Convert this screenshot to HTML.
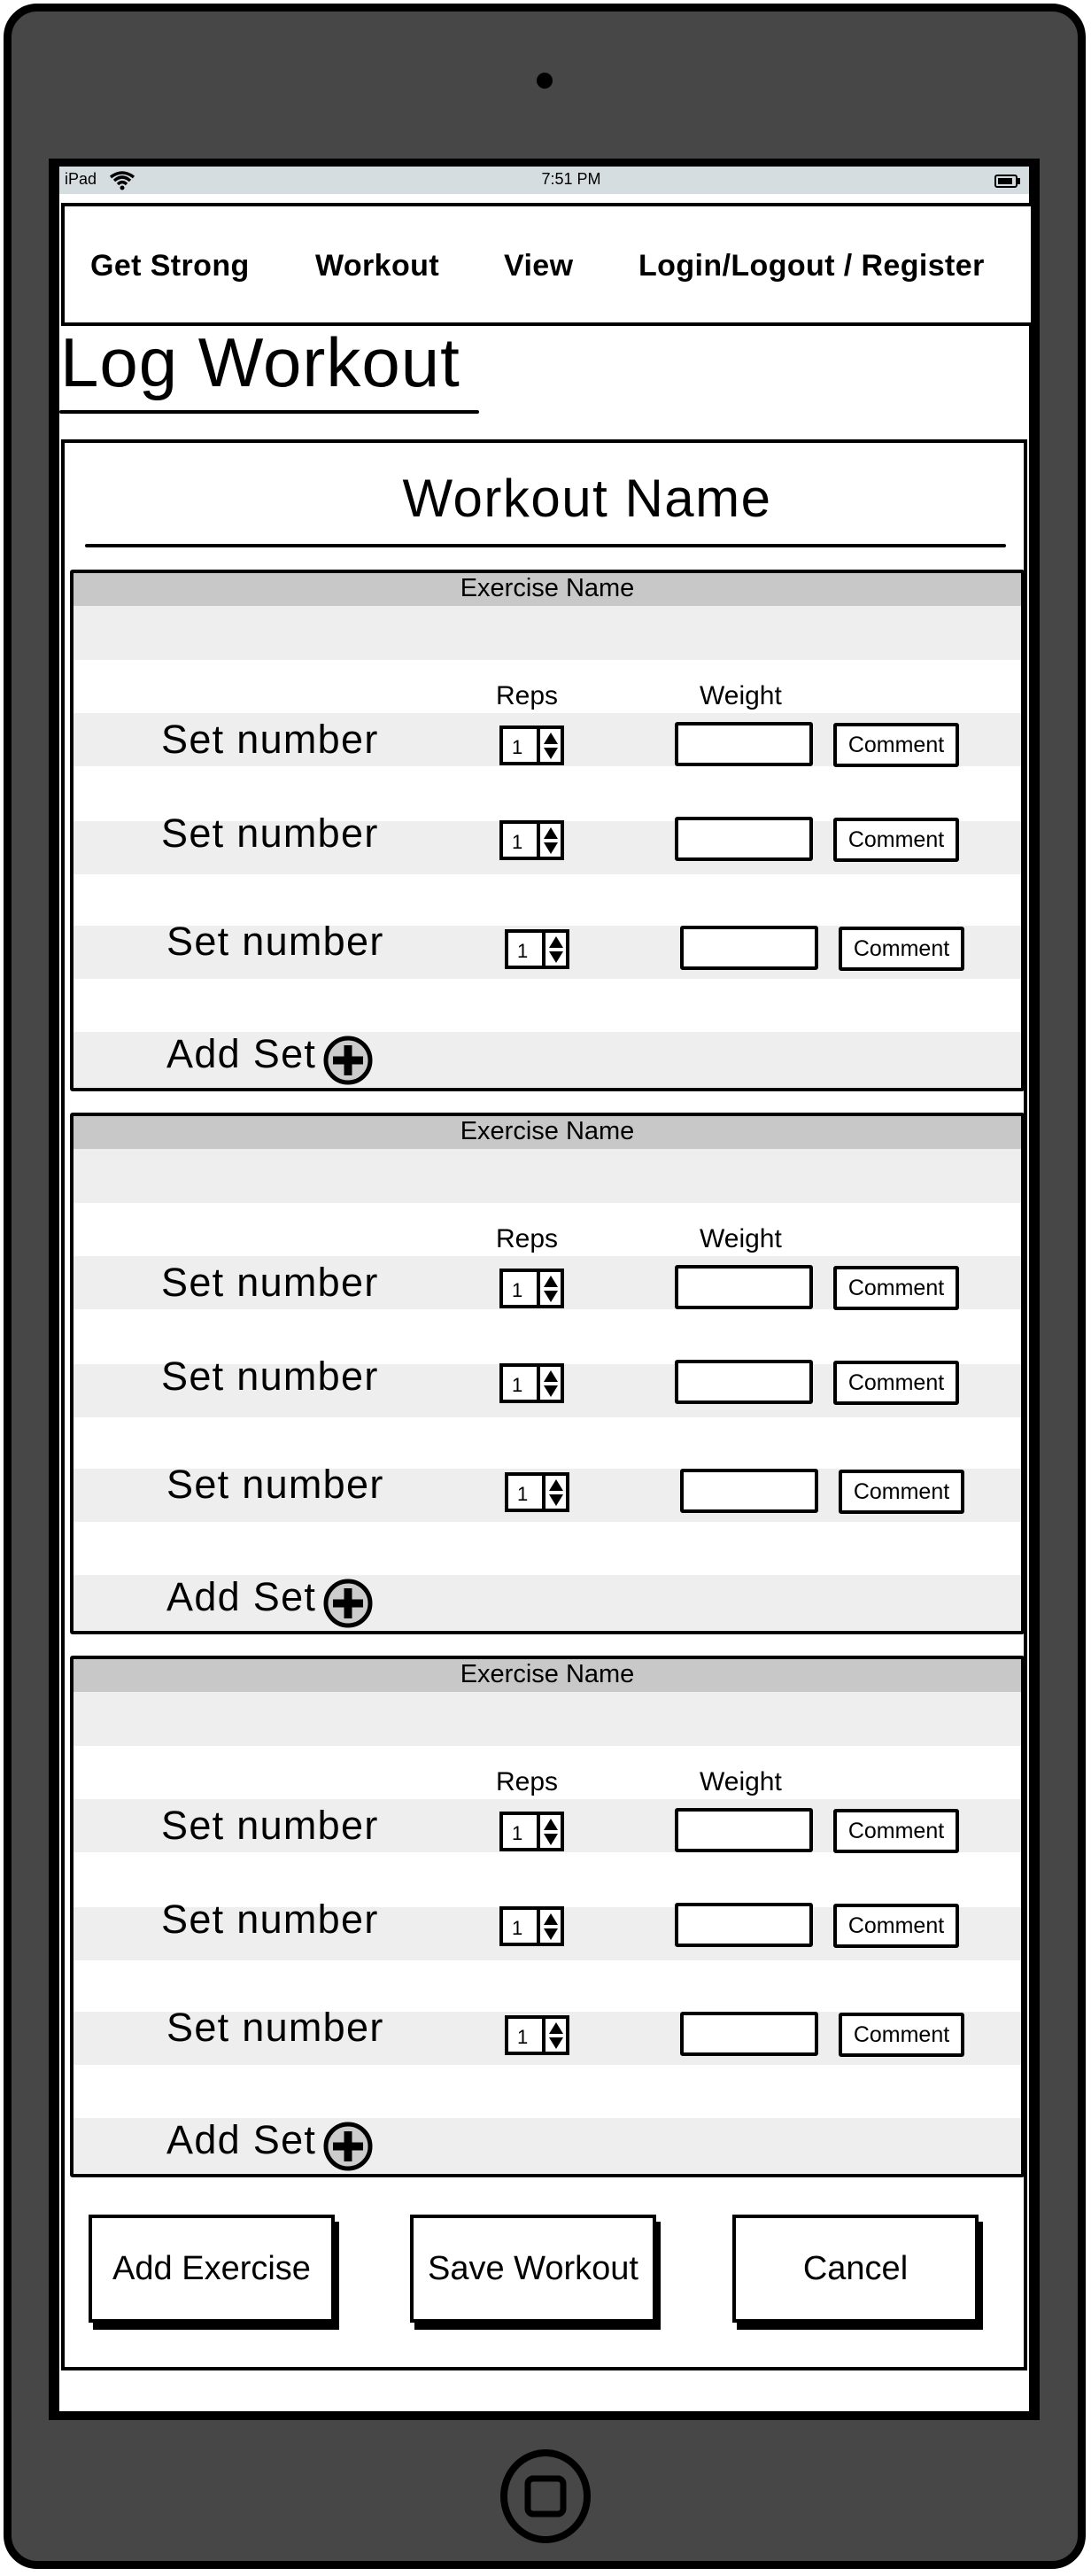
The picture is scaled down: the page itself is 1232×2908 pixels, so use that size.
<!DOCTYPE html>
<html><head><meta charset="utf-8"><style>
*{margin:0;padding:0;box-sizing:border-box}
body{width:1232px;height:2908px;background:#fff;position:relative;overflow:hidden;font-family:"Liberation Sans",sans-serif;color:#000}
.a{position:absolute}
.dev{left:4px;top:4px;width:1222px;height:2896px;background:#474747;border:9px solid #000;border-radius:38px}
.scr{left:55px;top:179px;width:1119px;height:2553px;background:#000}
.white{left:67px;top:188px;width:1095px;height:2534px;background:#fff}
.sb{left:67px;top:188px;width:1095px;height:31px;background:#d6dde0;font-size:18px}
.nav{left:69px;top:229px;width:1099px;height:139px;border:4px solid #000;background:#fff}
.nav span{position:absolute;top:48px;font-size:34px;font-weight:bold;letter-spacing:0.4px}
.sec{left:79px;width:1078px;height:589px;border:4px solid #000;border-radius:3px;background:#fff;overflow:hidden}
.g{background:#eeeeee}
.t{white-space:nowrap}
.sn{font-size:45px;letter-spacing:1.3px}
.spin{width:73px;height:45px;border:4px solid #000;background:#fff}
.spin .n{position:absolute;left:10px;top:8px;font-size:22px}
.spin .d{position:absolute;left:38px;top:0;width:4px;height:100%;background:#000}
.inp{width:156px;height:50px;border:4px solid #000;background:#fff;border-radius:3px}
.cm{width:142px;height:50px;border:4px solid #000;background:#fff;font-size:25px;text-align:center;line-height:42px;border-radius:3px}
.btn{width:278px;height:122px;border:4px solid #000;background:#fff;box-shadow:5px 8px 0 #000;font-size:38px;text-align:center;line-height:114px}
</style></head><body>
<div class="a dev"></div>
<div class="a" style="left:606px;top:82px;width:18px;height:18px;border-radius:50%;background:#000"></div>
<div class="a scr"></div>
<div class="a white"></div>
<div class="a sb">
 <span class="a" style="left:6px;top:4px">iPad</span>
 <svg class="a" style="left:56px;top:4px" width="30" height="24" viewBox="0 0 30 24"><path d="M2 8 Q15 -2 28 8" stroke="#000" stroke-width="3.5" fill="none"/><path d="M6 12 Q15 4 24 12" stroke="#000" stroke-width="3.5" fill="none"/><path d="M10 16 Q15 11 20 16" stroke="#000" stroke-width="3.5" fill="none"/><circle cx="15" cy="20" r="2.5"/></svg>
 <span class="a" style="left:515px;top:4px;width:126px;text-align:center">7:51 PM</span>
 <div class="a" style="left:1056px;top:9px;width:26px;height:15px;border:2px solid #000;border-radius:3px"><div style="margin:2px;width:16px;height:7px;background:#000"></div></div>
 <div class="a" style="left:1082px;top:13px;width:3px;height:7px;background:#000"></div>
</div>
<div class="a nav">
 <span style="left:29px">Get Strong</span>
 <span style="left:283px">Workout</span>
 <span style="left:496px">View</span>
 <span style="left:648px">Login/Logout / Register</span>
</div>
<div class="a t" style="left:68px;top:364px;font-size:78px;letter-spacing:1px">Log Workout</div>
<div class="a" style="left:67px;top:463px;width:474px;height:4px;background:#000;border-radius:2px"></div>
<div class="a" style="left:69px;top:496px;width:1091px;height:2180px;border:4px solid #000;background:#fff"></div>
<div class="a t" style="left:400px;top:528px;width:526px;text-align:center;font-size:60px;letter-spacing:1.5px">Workout Name</div>
<div class="a" style="left:96px;top:614px;width:1040px;height:4px;background:#000;border-radius:2px"></div>

<div class="a sec" style="top:643px">
 <div class="a" style="left:0;top:0;width:100%;height:37px;background:#c8c8c8;text-align:center;font-size:29px;line-height:34px">Exercise Name</div>
 <div class="a g" style="left:0;top:37px;width:100%;height:61px"></div>
 <div class="a" style="left:477px;top:122px;font-size:30px">Reps</div>
 <div class="a" style="left:707px;top:122px;font-size:30px">Weight</div>
 <div class="a g" style="left:0;top:158px;width:100%;height:60px"></div>
 <div class="a g" style="left:0;top:280px;width:100%;height:60px"></div>
 <div class="a g" style="left:0;top:398px;width:100%;height:60px"></div>
 <div class="a g" style="left:0;top:518px;width:100%;height:62px"></div>
 <div class="a t sn" style="left:99px;top:162px">Set number</div>
 <div class="a spin" style="left:481px;top:172px"><span class="n">1</span><span class="d"></span><svg class="a" style="left:45px;top:3px" width="18" height="32" viewBox="0 0 18 32"><path d="M9 1 L17 14 L1 14Z M1 18 L17 18 L9 31Z"/></svg></div>
 <div class="a inp" style="left:679px;top:168px"></div>
 <div class="a cm" style="left:858px;top:169px">Comment</div>
 <div class="a t sn" style="left:99px;top:268px">Set number</div>
 <div class="a spin" style="left:481px;top:279px"><span class="n">1</span><span class="d"></span><svg class="a" style="left:45px;top:3px" width="18" height="32" viewBox="0 0 18 32"><path d="M9 1 L17 14 L1 14Z M1 18 L17 18 L9 31Z"/></svg></div>
 <div class="a inp" style="left:679px;top:275px"></div>
 <div class="a cm" style="left:858px;top:276px">Comment</div>
 <div class="a t sn" style="left:105px;top:390px">Set number</div>
 <div class="a spin" style="left:487px;top:402px"><span class="n">1</span><span class="d"></span><svg class="a" style="left:45px;top:3px" width="18" height="32" viewBox="0 0 18 32"><path d="M9 1 L17 14 L1 14Z M1 18 L17 18 L9 31Z"/></svg></div>
 <div class="a inp" style="left:685px;top:398px"></div>
 <div class="a cm" style="left:864px;top:399px">Comment</div>
 <div class="a t sn" style="left:105px;top:517px">Add Set</div>
 <svg class="a" style="left:281px;top:521px" width="58" height="58" viewBox="0 0 58 58"><circle cx="29" cy="29" r="25" fill="#ccc" stroke="#000" stroke-width="5"/><path d="M29 12 V46 M12 29 H46" stroke="#000" stroke-width="9"/></svg>
</div>

<div class="a sec" style="top:1256px">
 <div class="a" style="left:0;top:0;width:100%;height:37px;background:#c8c8c8;text-align:center;font-size:29px;line-height:34px">Exercise Name</div>
 <div class="a g" style="left:0;top:37px;width:100%;height:61px"></div>
 <div class="a" style="left:477px;top:122px;font-size:30px">Reps</div>
 <div class="a" style="left:707px;top:122px;font-size:30px">Weight</div>
 <div class="a g" style="left:0;top:158px;width:100%;height:60px"></div>
 <div class="a g" style="left:0;top:280px;width:100%;height:60px"></div>
 <div class="a g" style="left:0;top:398px;width:100%;height:60px"></div>
 <div class="a g" style="left:0;top:518px;width:100%;height:62px"></div>
 <div class="a t sn" style="left:99px;top:162px">Set number</div>
 <div class="a spin" style="left:481px;top:172px"><span class="n">1</span><span class="d"></span><svg class="a" style="left:45px;top:3px" width="18" height="32" viewBox="0 0 18 32"><path d="M9 1 L17 14 L1 14Z M1 18 L17 18 L9 31Z"/></svg></div>
 <div class="a inp" style="left:679px;top:168px"></div>
 <div class="a cm" style="left:858px;top:169px">Comment</div>
 <div class="a t sn" style="left:99px;top:268px">Set number</div>
 <div class="a spin" style="left:481px;top:279px"><span class="n">1</span><span class="d"></span><svg class="a" style="left:45px;top:3px" width="18" height="32" viewBox="0 0 18 32"><path d="M9 1 L17 14 L1 14Z M1 18 L17 18 L9 31Z"/></svg></div>
 <div class="a inp" style="left:679px;top:275px"></div>
 <div class="a cm" style="left:858px;top:276px">Comment</div>
 <div class="a t sn" style="left:105px;top:390px">Set number</div>
 <div class="a spin" style="left:487px;top:402px"><span class="n">1</span><span class="d"></span><svg class="a" style="left:45px;top:3px" width="18" height="32" viewBox="0 0 18 32"><path d="M9 1 L17 14 L1 14Z M1 18 L17 18 L9 31Z"/></svg></div>
 <div class="a inp" style="left:685px;top:398px"></div>
 <div class="a cm" style="left:864px;top:399px">Comment</div>
 <div class="a t sn" style="left:105px;top:517px">Add Set</div>
 <svg class="a" style="left:281px;top:521px" width="58" height="58" viewBox="0 0 58 58"><circle cx="29" cy="29" r="25" fill="#ccc" stroke="#000" stroke-width="5"/><path d="M29 12 V46 M12 29 H46" stroke="#000" stroke-width="9"/></svg>
</div>

<div class="a sec" style="top:1869px">
 <div class="a" style="left:0;top:0;width:100%;height:37px;background:#c8c8c8;text-align:center;font-size:29px;line-height:34px">Exercise Name</div>
 <div class="a g" style="left:0;top:37px;width:100%;height:61px"></div>
 <div class="a" style="left:477px;top:122px;font-size:30px">Reps</div>
 <div class="a" style="left:707px;top:122px;font-size:30px">Weight</div>
 <div class="a g" style="left:0;top:158px;width:100%;height:60px"></div>
 <div class="a g" style="left:0;top:280px;width:100%;height:60px"></div>
 <div class="a g" style="left:0;top:398px;width:100%;height:60px"></div>
 <div class="a g" style="left:0;top:518px;width:100%;height:62px"></div>
 <div class="a t sn" style="left:99px;top:162px">Set number</div>
 <div class="a spin" style="left:481px;top:172px"><span class="n">1</span><span class="d"></span><svg class="a" style="left:45px;top:3px" width="18" height="32" viewBox="0 0 18 32"><path d="M9 1 L17 14 L1 14Z M1 18 L17 18 L9 31Z"/></svg></div>
 <div class="a inp" style="left:679px;top:168px"></div>
 <div class="a cm" style="left:858px;top:169px">Comment</div>
 <div class="a t sn" style="left:99px;top:268px">Set number</div>
 <div class="a spin" style="left:481px;top:279px"><span class="n">1</span><span class="d"></span><svg class="a" style="left:45px;top:3px" width="18" height="32" viewBox="0 0 18 32"><path d="M9 1 L17 14 L1 14Z M1 18 L17 18 L9 31Z"/></svg></div>
 <div class="a inp" style="left:679px;top:275px"></div>
 <div class="a cm" style="left:858px;top:276px">Comment</div>
 <div class="a t sn" style="left:105px;top:390px">Set number</div>
 <div class="a spin" style="left:487px;top:402px"><span class="n">1</span><span class="d"></span><svg class="a" style="left:45px;top:3px" width="18" height="32" viewBox="0 0 18 32"><path d="M9 1 L17 14 L1 14Z M1 18 L17 18 L9 31Z"/></svg></div>
 <div class="a inp" style="left:685px;top:398px"></div>
 <div class="a cm" style="left:864px;top:399px">Comment</div>
 <div class="a t sn" style="left:105px;top:517px">Add Set</div>
 <svg class="a" style="left:281px;top:521px" width="58" height="58" viewBox="0 0 58 58"><circle cx="29" cy="29" r="25" fill="#ccc" stroke="#000" stroke-width="5"/><path d="M29 12 V46 M12 29 H46" stroke="#000" stroke-width="9"/></svg>
</div>

<div class="a btn t" style="left:100px;top:2500px">Add Exercise</div>
<div class="a btn t" style="left:463px;top:2500px">Save Workout</div>
<div class="a btn t" style="left:827px;top:2500px">Cancel</div>

<svg class="a" style="left:560px;top:2762px" width="112" height="112" viewBox="0 0 112 112"><ellipse cx="56" cy="56" rx="47" ry="49" fill="none" stroke="#000" stroke-width="8"/><rect x="36" y="36" width="40" height="40" rx="6" fill="none" stroke="#000" stroke-width="7"/></svg>
</body></html>
